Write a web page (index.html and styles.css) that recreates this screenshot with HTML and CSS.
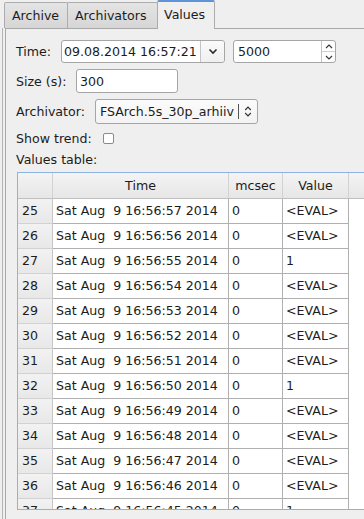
FILE: index.html
```html
<!DOCTYPE html>
<html>
<head>
<meta charset="utf-8">
<link rel="stylesheet" href="styles.css">
</head>
<body>
<div class="tabbar">
  <div class="tab t1">Archive</div>
  <div class="tab t2">Archivators</div>
  <div class="tab t3 active">Values</div>
</div>
<div class="outer">
<div class="panel">
  <div class="row r1">
    <span class="lbl l1">Time:</span>
    <div class="field date">
      <span class="txt">09.08.2014 16:57:21</span>
      <span class="dbtn"><svg width="10" height="7" viewBox="0 0 10 7"><path d="M1.5 1.5 L5 5 L8.5 1.5" fill="none" stroke="#2a2a2a" stroke-width="1.6"/></svg></span>
    </div>
    <div class="field spin">
      <span class="txt">5000</span>
      <span class="arrows">
        <span class="ar up"><svg width="8" height="5" viewBox="0 0 8 5"><path d="M1 4 L4 1 L7 4" fill="none" stroke="#333" stroke-width="1.1"/></svg></span>
        <span class="ar dn"><svg width="8" height="5" viewBox="0 0 8 5"><path d="M1 1 L4 4 L7 1" fill="none" stroke="#333" stroke-width="1.1"/></svg></span>
      </span>
    </div>
  </div>
  <div class="row r2">
    <span class="lbl l2">Size (s):</span>
    <div class="field size"><span class="txt">300</span></div>
  </div>
  <div class="row r3">
    <span class="lbl l3">Archivator:</span>
    <div class="field combo">
      <span class="txt clip">FSArch.5s_30p_arhiiv</span>
      <span class="cbtn"><svg width="8" height="11" viewBox="0 0 8 11"><path d="M1.2 4 L4 1.2 L6.8 4 M1.2 7 L4 9.8 L6.8 7" fill="none" stroke="#333" stroke-width="1.2"/></svg></span>
    </div>
  </div>
  <div class="row r4">
    <span class="lbl l4">Show trend:</span>
    <span class="check"></span>
  </div>
  <div class="row r5"><span class="lbl">Values table:</span></div>
  <div class="table">
    <div class="thead">
      <div class="hc corner"></div>
      <div class="hc">Time</div>
      <div class="hc">mcsec</div>
      <div class="hc">Value</div>
      <div class="hc rest"></div>
    </div>
    <div class="tr"><div class="vh">25</div><div class="td">Sat Aug&nbsp; 9 16:56:57 2014</div><div class="td">0</div><div class="td">&lt;EVAL&gt;</div><div class="empty"></div></div>
    <div class="tr"><div class="vh">26</div><div class="td">Sat Aug&nbsp; 9 16:56:56 2014</div><div class="td">0</div><div class="td">&lt;EVAL&gt;</div><div class="empty"></div></div>
    <div class="tr"><div class="vh">27</div><div class="td">Sat Aug&nbsp; 9 16:56:55 2014</div><div class="td">0</div><div class="td">1</div><div class="empty"></div></div>
    <div class="tr"><div class="vh">28</div><div class="td">Sat Aug&nbsp; 9 16:56:54 2014</div><div class="td">0</div><div class="td">&lt;EVAL&gt;</div><div class="empty"></div></div>
    <div class="tr"><div class="vh">29</div><div class="td">Sat Aug&nbsp; 9 16:56:53 2014</div><div class="td">0</div><div class="td">&lt;EVAL&gt;</div><div class="empty"></div></div>
    <div class="tr"><div class="vh">30</div><div class="td">Sat Aug&nbsp; 9 16:56:52 2014</div><div class="td">0</div><div class="td">&lt;EVAL&gt;</div><div class="empty"></div></div>
    <div class="tr"><div class="vh">31</div><div class="td">Sat Aug&nbsp; 9 16:56:51 2014</div><div class="td">0</div><div class="td">&lt;EVAL&gt;</div><div class="empty"></div></div>
    <div class="tr"><div class="vh">32</div><div class="td">Sat Aug&nbsp; 9 16:56:50 2014</div><div class="td">0</div><div class="td">1</div><div class="empty"></div></div>
    <div class="tr"><div class="vh">33</div><div class="td">Sat Aug&nbsp; 9 16:56:49 2014</div><div class="td">0</div><div class="td">&lt;EVAL&gt;</div><div class="empty"></div></div>
    <div class="tr"><div class="vh">34</div><div class="td">Sat Aug&nbsp; 9 16:56:48 2014</div><div class="td">0</div><div class="td">&lt;EVAL&gt;</div><div class="empty"></div></div>
    <div class="tr"><div class="vh">35</div><div class="td">Sat Aug&nbsp; 9 16:56:47 2014</div><div class="td">0</div><div class="td">&lt;EVAL&gt;</div><div class="empty"></div></div>
    <div class="tr"><div class="vh">36</div><div class="td">Sat Aug&nbsp; 9 16:56:46 2014</div><div class="td">0</div><div class="td">&lt;EVAL&gt;</div><div class="empty"></div></div>
    <div class="tr"><div class="vh">37</div><div class="td">Sat Aug&nbsp; 9 16:56:45 2014</div><div class="td">0</div><div class="td">1</div><div class="empty"></div></div>
  </div>
</div>
</div>
</body>
</html>
```
FILE: styles.css
```css
html, body {
  margin: 0;
  padding: 0;
  width: 364px;
  height: 519px;
  overflow: hidden;
  background: #efefef;
  font-family: "DejaVu Sans", sans-serif;
  font-size: 12.6px;
  color: #1c1c1c;
}
.tabbar {
  display: flex;
  align-items: flex-end;
  height: 28px;
  padding-left: 4px;
  position: relative;
  z-index: 2;
}
.tab {
  height: 25px;
  line-height: 26px;
  border: 1px solid #acacac;
  border-bottom: none;
  border-radius: 2px 2px 0 0;
  background: linear-gradient(#e4e4e4, #d6d6d6);
  margin-right: -1px;
  box-sizing: border-box;
  height: 26px;
  white-space: nowrap;
}
.t1 { width: 64px; padding-left: 7px; }
.t2 { width: 91px; padding-left: 7px; }
.t3 { width: 58px; padding-left: 6px; }
.tab.active {
  height: 29px;
  line-height: 25px;
  background: #efefef;
  border-top: 2px solid #5d93d8;
  margin-bottom: -1px;
}
.outer {
  border-left: 1px solid #b4b4b4;
  margin-left: 2px;
  padding-left: 2px;
  height: 491px;
}
.panel {
  border-left: 1px solid #a8a8a8;
  border-top: 1px solid #a8a8a8;
  width: 420px;
  height: 520px;
  padding: 11px 0 0 10px;
  box-sizing: border-box;
  display: flex;
  flex-direction: column;
}
.row {
  display: flex;
  align-items: center;
}
.r1 { height: 23px; }
.r2 { height: 24px; margin-top: 6px; }
.r3 { height: 25px; margin-top: 6px; }
.r4 { height: 18px; margin-top: 5px; }
.r5 { height: 25px; }
.lbl { white-space: nowrap; flex: none; }
.l1 { width: 45px; }
.l2 { width: 60px; }
.l3 { width: 79px; }
.l4 { width: 87px; }
.field {
  height: 100%;
  box-sizing: border-box;
  border: 1px solid #a5a5a5;
  border-radius: 3px;
  background: #fff;
  display: flex;
  align-items: center;
  flex: none;
}
.txt { padding-left: 3px; white-space: nowrap; }
.date { width: 164px; }
.date .txt { width: 139px; overflow: hidden; box-sizing: border-box; border-right: 1px solid #c4c4c4; height: 100%; line-height: 21px; padding-left: 2px; }
.dbtn { flex: 1; display: flex; justify-content: center; align-items: center; background: linear-gradient(#fafafa, #f0f0f0); height: 100%; border-radius: 0 3px 3px 0; }
.spin { width: 103px; margin-left: 8px; }
.spin .txt { flex: 1; padding-left: 4px; }
.arrows { width: 13px; height: 100%; border-left: 1px solid #c4c4c4; display: flex; flex-direction: column; }
.ar { flex: 1; display: flex; align-items: center; justify-content: center; }
.ar.up { border-bottom: 1px solid #d0d0d0; }
.size { width: 102px; }
.combo { width: 163px; background: linear-gradient(#fbfbfb, #f3f3f3); }
.combo .txt { width: 143px; overflow: hidden; box-sizing: border-box; border-right: 1px solid #555; line-height: 15px; padding-left: 4px; }
.cbtn { flex: 1; display: flex; justify-content: center; align-items: center; }
.check {
  width: 11px;
  height: 11px;
  border: 1px solid #8a8a8a;
  border-radius: 2px;
  background: #fff;
  box-sizing: border-box;
}
.table {
  margin-left: 1px;
  width: 380px;
  height: 338px;
  border: 1px solid #8db2df;
  background: #fff;
  overflow: hidden;
  box-sizing: border-box;
}
.thead, .tr {
  display: grid;
  grid-template-columns: 35px 176px 54px 66px 1fr;
}
.thead {
  height: 26px;
  background: linear-gradient(#f4f4f4, #e6e6e6);
  border-bottom: 1px solid #c0c0c0;
  box-sizing: border-box;
}
.hc {
  border-right: 1px solid #d2d2d2;
  text-align: center;
  line-height: 25px;
}
.hc.rest { border-right: none; }
.tr { height: 25px; }
.vh {
  background: linear-gradient(#f2f2f2, #e8e8e8);
  border-right: 1px solid #c6c6c6;
  border-bottom: 1px solid #d2d2d2;
  padding-left: 4px;
  line-height: 24px;
}
.td {
  border-right: 1px solid #b0b0b0;
  border-bottom: 1px solid #b0b0b0;
  padding-left: 3px;
  line-height: 24px;
  white-space: nowrap;
}
```
